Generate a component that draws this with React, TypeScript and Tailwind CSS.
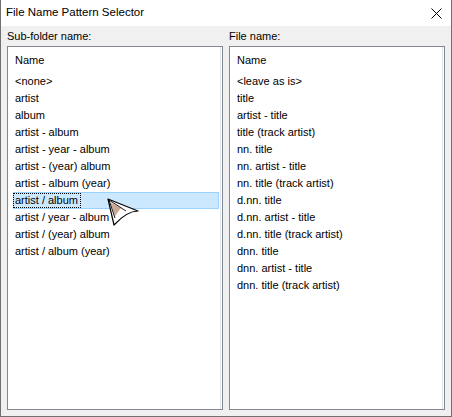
const folderItems = [
  '<none>',
  'artist',
  'album',
  'artist - album',
  'artist - year - album',
  'artist - (year) album',
  'artist - album (year)',
  'artist / album',
  'artist / year - album',
  'artist / (year) album',
  'artist / album (year)',
];

const fileItems = [
  '<leave as is>',
  'title',
  'artist - title',
  'title (track artist)',
  'nn. title',
  'nn. artist - title',
  'nn. title (track artist)',
  'd.nn. title',
  'd.nn. artist - title',
  'd.nn. title (track artist)',
  'dnn. title',
  'dnn. artist - title',
  'dnn. title (track artist)',
];

function ListBox({ items, selected }: { items: string[]; selected?: number }) {
  return (
    <div className="relative flex-1 border border-[#828790] bg-white">
      <div className="absolute top-0 bottom-0 right-[1px] w-px bg-[#dde6ef]" />
      <div className="flex h-[26px] items-center pl-[7px]">Name</div>
      <div className="flex flex-col">
        {items.map((item, i) =>
          i === selected ? (
            <div
              key={item}
              className="ml-[5px] mr-[3px] flex h-[17px] items-center border border-[#99d1ff] bg-[#cce8ff]"
            >
              <span className="-ml-px flex h-[15px] items-center border border-dotted border-black pl-px pr-[2px]">
                {item}
              </span>
            </div>
          ) : (
            <div key={item} className="flex h-[17px] items-center pl-[7px]">
              {item}
            </div>
          )
        )}
      </div>
    </div>
  );
}

function Pointer() {
  return (
    <svg className="absolute left-[104px] top-[196px]" width="36" height="32" viewBox="0 0 36 32">
      <path
        d="M3 3 L33 15 Q22 15 9 29 Z"
        fill="white"
        stroke="black"
        strokeWidth="1.2"
        strokeLinejoin="round"
      />
      <path d="M5 6 L10 20 L16 12 Z" fill="#b8826a" opacity="0.7" />
      <path d="M4 4 L10 22 M4 4 L21 15" stroke="black" strokeWidth="0.9" fill="none" />
    </svg>
  );
}

export default function App() {
  return (
    <div className="relative flex h-[417px] w-[452px] flex-col border-x border-b border-[#707070] font-['Liberation_Sans',Arial,sans-serif] text-[11px] leading-none text-black">
      <div className="flex h-[26px] shrink-0 items-center justify-between bg-white pl-[5px] pr-[9px] text-[11.5px]">
        <span>File Name Pattern Selector</span>
        <svg width="11" height="11" viewBox="0 0 11 11">
          <path d="M0.5 0.5 L10.5 10.5 M10.5 0.5 L0.5 10.5" stroke="black" strokeWidth="1" />
        </svg>
      </div>
      <div className="flex flex-1 gap-[6px] bg-[#f0f0f0] px-[6px] pb-[6px]">
        <div className="flex flex-1 flex-col">
          <div className="flex h-[20px] items-center">Sub-folder name:</div>
          <ListBox items={folderItems} selected={7} />
        </div>
        <div className="flex flex-1 flex-col">
          <div className="flex h-[20px] items-center">File name:</div>
          <ListBox items={fileItems} />
        </div>
      </div>
      <Pointer />
    </div>
  );
}
